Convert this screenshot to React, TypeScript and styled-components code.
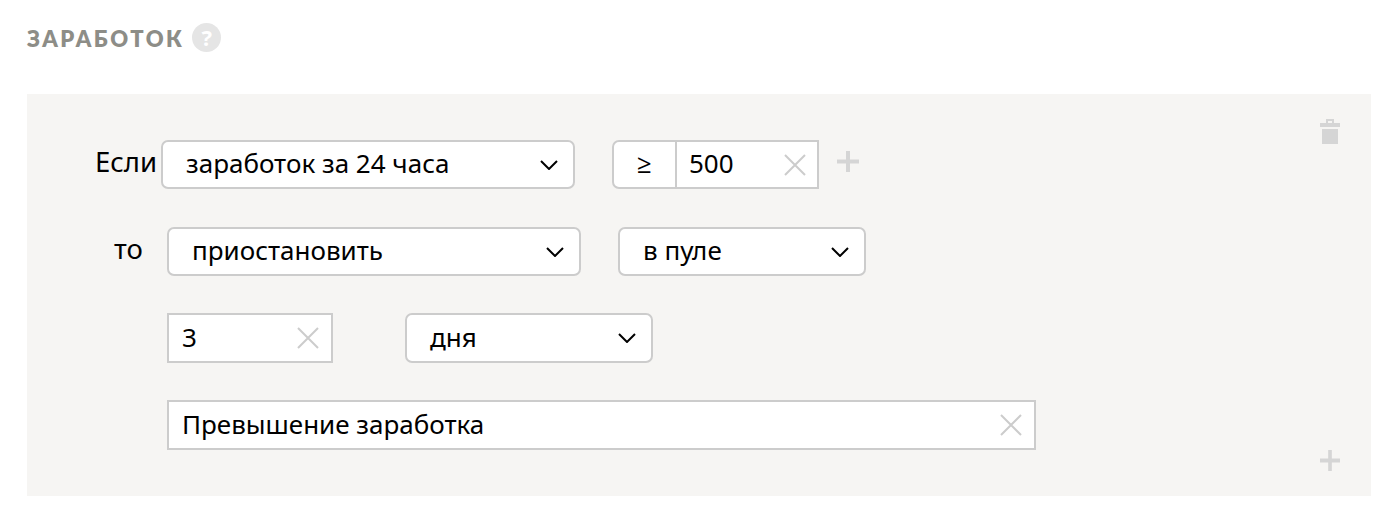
import styled, { createGlobalStyle } from "styled-components";

const GlobalStyle = createGlobalStyle`
  html, body {
    margin: 0;
    padding: 0;
    background: #fff;
  }
  body {
    font-family: "Noto Sans", "Open Sans", sans-serif;
    color: #000;
  }
`;

const Page = styled.div`
  width: 1400px;
  height: 530px;
  padding: 22px 29px 0 27px;
  box-sizing: border-box;
  overflow: hidden;
`;

const TitleRow = styled.div`
  display: flex;
  align-items: center;
  gap: 8px;
  height: 32px;
`;

const Title = styled.h2`
  margin: 0;
  font-family: Lato, sans-serif;
  font-size: 22px;
  font-weight: 800;
  letter-spacing: 2.45px;
  color: #8d8d87;
`;

const Help = styled.span`
  display: flex;
  align-items: center;
  justify-content: center;
  width: 29px;
  height: 29px;
  margin-top: -2px;
  border-radius: 50%;
  background: #e5e5e5;
  color: #fff;
  font-size: 22px;
  font-weight: 700;
`;

const Panel = styled.section`
  position: relative;
  display: flex;
  flex-direction: column;
  gap: 37px;
  height: 402px;
  margin-top: 40px;
  padding: 46px 0 0 68px;
  box-sizing: border-box;
  background: #f6f5f3;
`;

const Row = styled.div<{ $indent?: number; $height?: number; $after?: number }>`
  display: flex;
  align-items: center;
  height: ${({ $height }) => $height ?? 49}px;
  margin-left: ${({ $indent }) => $indent ?? 0}px;
  margin-bottom: ${({ $after }) => $after ?? 0}px;
`;

const Label = styled.span<{ $width: number; $pad?: number }>`
  flex: none;
  width: ${({ $width }) => $width}px;
  padding-left: ${({ $pad }) => $pad ?? 0}px;
  box-sizing: border-box;
  font-size: 27.5px;
  margin-top: -7px;
`;

const Value = styled.span<{ $lift?: number }>`
  margin-bottom: ${({ $lift }) => $lift ?? 4}px;
`;

const Select = styled.div<{ $width: number; $after?: number }>`
  display: flex;
  align-items: center;
  justify-content: space-between;
  flex: none;
  width: ${({ $width }) => $width}px;
  height: 100%;
  margin-right: ${({ $after }) => $after ?? 0}px;
  padding: 0 15px 0 23px;
  box-sizing: border-box;
  border: 2px solid #ccc;
  border-radius: 7px;
  background: #fff;
  font-size: 26px;
`;

const Input = styled.div<{ $width: number; $after?: number }>`
  display: flex;
  align-items: center;
  justify-content: space-between;
  flex: none;
  width: ${({ $width }) => $width}px;
  height: 100%;
  margin-right: ${({ $after }) => $after ?? 0}px;
  padding: 0 12px 0 13px;
  box-sizing: border-box;
  border: 2px solid #ccc;
  background: #fff;
  font-size: 26px;
`;

const Compare = styled.div`
  display: flex;
  flex: none;
  width: 207px;
  height: 100%;
  box-sizing: border-box;
  border: 2px solid #ccc;
  border-radius: 7px 0 0 7px;
  background: #fff;
  font-size: 26px;
`;

const Operator = styled.div`
  display: flex;
  align-items: center;
  justify-content: center;
  width: 63px;
  box-sizing: border-box;
  border-right: 2px solid #ccc;
`;

const CompareValue = styled.div`
  display: flex;
  flex: 1;
  align-items: center;
  justify-content: space-between;
  padding: 0 11px 0 12px;
`;

const IconButton = styled.span`
  display: flex;
  flex: none;
  margin-left: 18px;
  margin-top: -7px;
`;

const CornerIcon = styled.span<{ $top: number }>`
  position: absolute;
  top: ${({ $top }) => $top}px;
  right: 31px;
  display: flex;
`;

const Chevron = () => (
  <svg width="18" height="10" viewBox="0 0 18 10" fill="none">
    <path d="M1 1 L9 9 L17 1" stroke="#000" strokeWidth="2" />
  </svg>
);

const Clear = () => (
  <svg width="22" height="22" viewBox="0 0 22 22" fill="none">
    <path d="M1 1 L21 21 M21 1 L1 21" stroke="#ccc" strokeWidth="2" />
  </svg>
);

const Plus = ({ width = 22, height = 21 }: { width?: number; height?: number }) => (
  <svg width={width} height={height} viewBox="0 0 22 22" preserveAspectRatio="none">
    <path d="M9 0 H13 V9 H22 V13 H13 V22 H9 V13 H0 V9 H9 Z" fill="#d5d5d5" />
  </svg>
);

const Trash = () => (
  <svg width="20" height="25" viewBox="0 0 20 25">
    <path d="M6 0 H14 V4 H20 V8 H0 V4 H6 Z M8 2 V4 H12 V2 Z" fill="#d5d5d5" fillRule="evenodd" />
    <rect x="2" y="10" width="16" height="15" fill="#d5d5d5" />
  </svg>
);

export default function App() {
  return (
    <Page>
      <GlobalStyle />
      <TitleRow>
        <Title>ЗАРАБОТОК</Title>
        <Help>?</Help>
      </TitleRow>
      <Panel>
        <CornerIcon $top={25}>
          <Trash />
        </CornerIcon>
        <Row $after={1}>
          <Label $width={66}>Если</Label>
          <Select $width={414} $after={37}>
            <Value>заработок за 24 часа</Value>
            <Chevron />
          </Select>
          <Compare>
            <Operator>
              <Value>≥</Value>
            </Operator>
            <CompareValue>
              <Value>500</Value>
              <Clear />
            </CompareValue>
          </Compare>
          <IconButton>
            <Plus />
          </IconButton>
        </Row>
        <Row>
          <Label $width={72} $pad={19}>
            то
          </Label>
          <Select $width={414} $after={37}>
            <Value>приостановить</Value>
            <Chevron />
          </Select>
          <Select $width={248}>
            <Value>в пуле</Value>
            <Chevron />
          </Select>
        </Row>
        <Row $indent={72} $height={50}>
          <Input $width={166} $after={72}>
            <Value $lift={2}>3</Value>
            <Clear />
          </Input>
          <Select $width={248}>
            <Value $lift={2}>дня</Value>
            <Chevron />
          </Select>
        </Row>
        <Row $indent={72} $height={50}>
          <Input $width={869}>
            <Value $lift={2}>Превышение заработка</Value>
            <Clear />
          </Input>
        </Row>
        <CornerIcon $top={356}>
          <Plus width={20} />
        </CornerIcon>
      </Panel>
    </Page>
  );
}
